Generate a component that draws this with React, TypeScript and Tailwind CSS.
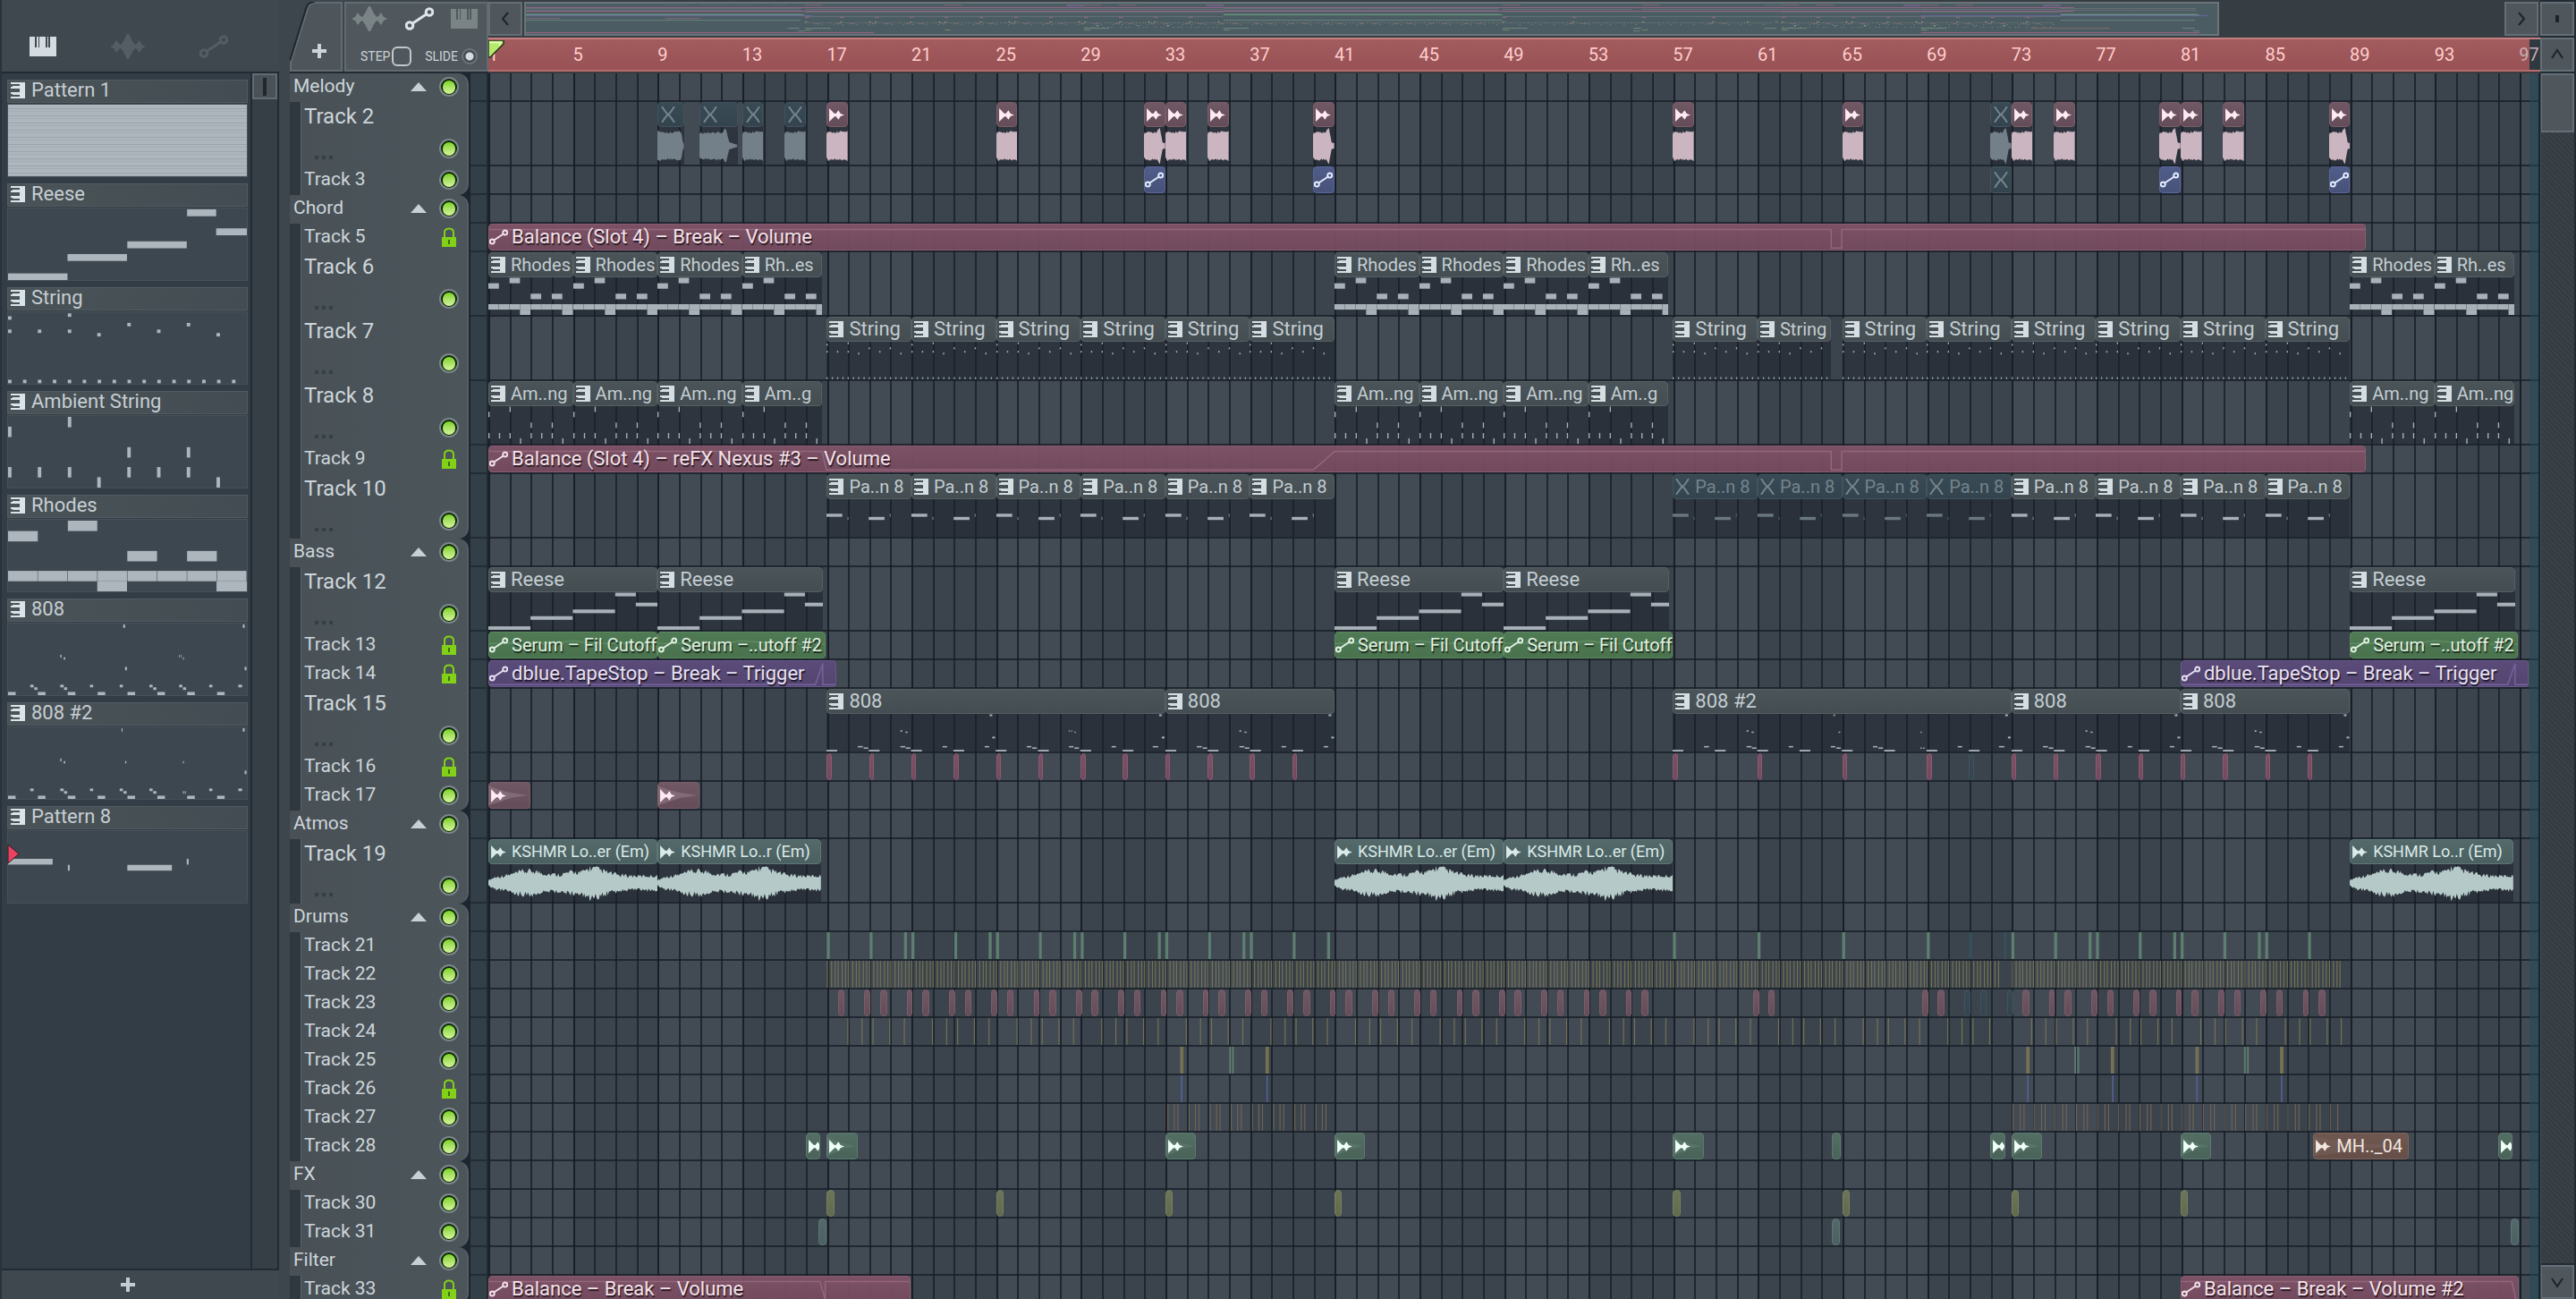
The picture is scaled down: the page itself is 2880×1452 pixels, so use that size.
import React from 'react';

type Tone = 'slate' | 'rose' | 'maroon' | 'blue' | 'green' | 'purple' | 'teal' | 'moss' | 'brown' | 'olive' | 'muted';

interface Clip {
  at: number;
  len: number;
  tone: Tone;
  icon?: 'pattern' | 'auto' | 'audio';
  label?: string;
  notes?: string;
  wave?: 'hit' | 'tail' | 'short' | 'long' | 'pad';
  curve?: string;
  size?: 'sm' | 'md';
}

interface Tick {
  at: number;
  w: number;
  fill: string;
}

interface Track {
  name: string;
  tall?: boolean;
  lock?: boolean;
  clips?: Clip[];
  ticks?: Tick[];
}

interface Group {
  name: string;
  tracks: Track[];
}

const BARS = 97;
const pct = (bars: number) => `${(bars / BARS) * 100}%`;
const range = (n: number) => Array.from({ length: n }, (_, i) => i);

// note rects are [x, y, w, h] on a 755 x 248 board that covers `bars` bars
const PATTERNS: Record<string, { bars: number; notes: number[][] }> = {
  Reese: { bars: 8, notes: [[0, 225, 188, 24], [188, 158, 188, 24], [377, 114, 188, 24], [566, 3, 92, 24], [658, 69, 97, 24]] },
  String: {
    bars: 4,
    notes: [
      [0, 14, 11, 12], [0, 60, 11, 12], [94, 60, 11, 12], [189, 4, 11, 12], [189, 60, 11, 12], [282, 72, 11, 12],
      [377, 37, 11, 12], [471, 60, 11, 12], [565, 37, 11, 12], [659, 72, 11, 12],
      ...range(16).map((i) => [i * 47.2, 234, 11, 12]),
    ],
  },
  'Ambient String': {
    bars: 4,
    notes: [
      [0, 37, 11, 36], [189, 3, 11, 36], [377, 108, 11, 36], [565, 108, 11, 36], [282, 212, 11, 36], [659, 212, 11, 36],
      ...[0, 94, 189, 377, 471, 565].map((x) => [x, 177, 11, 36]),
    ],
  },
  Rhodes: {
    bars: 4,
    notes: [
      [0, 39, 94, 36], [189, 3, 93, 36], [377, 108, 94, 36], [566, 108, 94, 36],
      ...range(8).map((i) => [i * 94.4, 177, 93, 36]), [282, 213, 94, 35], [659, 213, 96, 35],
    ],
  },
  '808': {
    bars: 16,
    notes: [
      ...range(8).map((i) => [i * 94.4, 237, 24, 11]),
      [70, 212, 11, 9], [83, 221, 10, 9], [165, 212, 11, 9], [177, 221, 10, 9], [259, 212, 10, 9], [353, 212, 10, 9],
      [447, 212, 10, 9], [459, 221, 10, 9], [541, 212, 10, 9], [553, 221, 10, 9], [636, 212, 10, 9], [728, 212, 12, 9],
      [364, 3, 6, 12], [742, 3, 6, 12], [165, 108, 4, 10], [176, 117, 5, 8], [370, 150, 6, 12], [748, 150, 6, 12],
      [541, 108, 2, 10], [546, 108, 2, 10], [553, 117, 3, 8],
    ],
  },
  '808 #2': {
    bars: 16,
    notes: [
      ...range(8).map((i) => [i * 94.4, 237, 24, 11]),
      [70, 212, 11, 9], [165, 212, 11, 9], [177, 221, 10, 9], [259, 212, 10, 9], [353, 212, 10, 9], [365, 221, 10, 9],
      [447, 212, 10, 9], [459, 221, 10, 9], [553, 221, 3, 9], [559, 221, 3, 9], [636, 212, 10, 9], [728, 212, 12, 9],
      [359, 3, 3, 12], [742, 3, 6, 12], [165, 108, 4, 10], [176, 117, 5, 8], [370, 117, 4, 8], [748, 150, 6, 12], [553, 117, 3, 8],
    ],
  },
  'Pattern 8': { bars: 4, notes: [[0, 96, 141, 20], [189, 117, 6, 20], [377, 117, 141, 20], [565, 96, 6, 20]] },
};

const pat = (at: number, len: number, label: string, notes: string, tone: Tone = 'slate', size?: Clip['size']): Clip => ({
  at, len, tone, label, notes, icon: 'pattern', size,
});
const auto = (at: number, len: number, tone: Tone, label: string, curve: string, size?: Clip['size']): Clip => ({
  at, len, tone, label, curve, icon: 'auto', size,
});
const audio = (at: number, len: number, tone: Tone, wave: Clip['wave']): Clip => ({ at, len, tone, wave, icon: 'audio' });
const box = (at: number, len: number, tone: Tone): Clip => ({ at, len, tone });

const YELLOW = '#757253';
const ORANGE = '#706453';
const GREEN = '#5e7f70';
const INDIGO = '#53609a';
const FADED = '#35505a';

const melody = [
  audio(8, 1.25, 'muted', 'short'), audio(10, 1.78, 'muted', 'long'), audio(12, 1, 'muted', 'hit'), audio(14, 1, 'muted', 'hit'),
  ...[16, 24].map((b) => audio(b, 1, 'rose', 'hit')),
  audio(31, 1, 'rose', 'tail'), audio(32, 1, 'rose', 'hit'), audio(34, 1, 'rose', 'hit'), audio(39, 1, 'rose', 'tail'),
  audio(56, 1, 'rose', 'hit'), audio(64, 1, 'rose', 'hit'),
  audio(71, 1, 'muted', 'tail'), audio(72, 1, 'rose', 'hit'), audio(74, 1, 'rose', 'hit'),
  audio(79, 1, 'rose', 'tail'), audio(80, 1, 'rose', 'hit'), audio(82, 1, 'rose', 'hit'), audio(87, 1, 'rose', 'tail'),
];

const every = (from: number, to: number, step: number, offsets: number[], w: number, fill: string): Tick[] => {
  const out: Tick[] = [];
  for (let b = from; b < to; b += step) offsets.forEach((o) => b + o < to && out.push({ at: b + o, w, fill }));
  return out;
};

const snares = (from: number, to: number): Clip[] => {
  const out: Clip[] = [box(from + 0.52, 0.32, 'rose')];
  for (let b = from + 1.78; b < to - 0.3; b += 2) out.push(box(b, 0.28, 'rose'), box(b + 0.74, 0.32, 'rose'));
  return out;
};

const GROUPS: Group[] = [
  {
    name: 'Melody',
    tracks: [
      { name: 'Track 2', tall: true, clips: melody },
      { name: 'Track 3', clips: [31, 39, 71, 79, 87].map((b) => auto(b, 1, b === 71 ? 'muted' : 'blue', '', '')) },
    ],
  },
  {
    name: 'Chord',
    tracks: [
      { name: 'Track 5', lock: true, clips: [auto(0, 88.77, 'maroon', 'Balance (Slot 4) – Break – Volume', 'M0 6 H63.5 V28 H64 V6 H88.77')] },
      {
        name: 'Track 6',
        tall: true,
        clips: [0, 4, 8, 12, 40, 44, 48, 52, 88, 92].map((b) =>
          pat(b, [12, 52, 92].includes(b) ? 3.78 : 4, [12, 52, 92].includes(b) ? 'Rh..es' : 'Rhodes', 'Rhodes', 'slate', 'md')),
      },
      {
        name: 'Track 7',
        tall: true,
        clips: [16, 20, 24, 28, 32, 36, 56, 60, 64, 68, 72, 76, 80, 84].map((b) =>
          pat(b, b === 60 ? 3.47 : 4, 'String', 'String', 'slate', b === 60 ? 'md' : undefined)),
      },
      {
        name: 'Track 8',
        tall: true,
        clips: [0, 4, 8, 12, 40, 44, 48, 52, 88, 92].map((b) =>
          pat(b, [12, 52, 92].includes(b) ? 3.78 : 4, [12, 52].includes(b) ? 'Am..g' : 'Am..ng', 'Ambient String', 'slate', 'md')),
      },
      {
        name: 'Track 9',
        lock: true,
        clips: [auto(0, 88.77, 'maroon', 'Balance (Slot 4) – reFX Nexus #3 – Volume', 'M0 6 H15.75 L15.95 28 H39 L40 6 H63.5 V28 H64 V6 H88.77')],
      },
      {
        name: 'Track 10',
        tall: true,
        clips: [16, 20, 24, 28, 32, 36, 56, 60, 64, 68, 72, 76, 80, 84].map((b) =>
          pat(b, 4, 'Pa..n 8', 'Pattern 8', b >= 56 && b < 72 ? 'muted' : 'slate', 'md')),
      },
    ],
  },
  {
    name: 'Bass',
    tracks: [
      { name: 'Track 12', tall: true, clips: [0, 8, 40, 48, 88].map((b) => pat(b, b % 40 === 0 ? 8 : 7.8, 'Reese', 'Reese')) },
      {
        name: 'Track 13',
        lock: true,
        clips: [
          auto(0, 8, 'green', 'Serum – Fil Cutoff', 'M0 13 H3 L4 10 L5 13 H8', 'md'),
          auto(8, 7.95, 'green', 'Serum –..utoff #2', 'M0 13 H3 L4 10 L6 14 H8', 'md'),
          auto(40, 8, 'green', 'Serum – Fil Cutoff', 'M0 13 H3 L4 10 L5 13 H8', 'md'),
          auto(48, 8, 'green', 'Serum – Fil Cutoff', 'M0 13 H3 L4 10 L5 13 H8', 'md'),
          auto(88, 7.95, 'green', 'Serum –..utoff #2', 'M0 13 H3 L4 10 L6 14 H8', 'md'),
        ],
      },
      {
        name: 'Track 14',
        lock: true,
        clips: [0, 80].map((b) => auto(b, 16.45, 'purple', 'dblue.TapeStop – Break – Trigger', 'M0 28 H15.5 L15.85 3 V28 H16.45')),
      },
      {
        name: 'Track 15',
        tall: true,
        clips: [pat(16, 16, '808', '808'), pat(32, 8, '808', '808'), pat(56, 16, '808 #2', '808 #2'), pat(72, 8, '808', '808'), pat(80, 8, '808', '808')],
      },
      {
        name: 'Track 16',
        lock: true,
        clips: [
          ...[...range(12).map((i) => 16 + i * 2), 56, 60, 64, 68, ...range(8).map((i) => 72 + i * 2)].map((b) => box(b, 0.23, 'maroon')),
          box(70, 0.23, 'muted'),
        ],
      },
      { name: 'Track 17', clips: [audio(0, 1.97, 'rose', 'pad'), audio(8, 1.97, 'rose', 'pad')] },
    ],
  },
  {
    name: 'Atmos',
    tracks: [
      {
        name: 'Track 19',
        tall: true,
        clips: [[0, 8], [8, 7.72], [40, 8], [48, 8], [88, 7.72]].map(([b, l]) => ({
          ...audio(b, l, 'teal', 'pad'), label: l === 8 ? 'KSHMR Lo..er (Em)' : 'KSHMR Lo..r (Em)', size: 'sm' as const,
        })),
      },
    ],
  },
  {
    name: 'Drums',
    tracks: [
      {
        name: 'Track 21',
        ticks: [
          ...every(16, 40, 4, [0, 2.02, 3.65], 0.14, GREEN), ...every(56, 72, 4, [0], 0.14, GREEN),
          ...[70, 71.64].map((at) => ({ at, w: 0.14, fill: FADED })), ...every(72, 87, 4, [0, 2.02, 3.65], 0.14, GREEN),
        ],
      },
      { name: 'Track 22', ticks: [...every(16, 71.5, 1, [0, 0.2, 0.37, 0.51, 0.7, 0.86], 0.05, YELLOW), ...every(72, 87.6, 1, [0.02, 0.2, 0.37, 0.51, 0.7, 0.86], 0.05, YELLOW)] },
      {
        name: 'Track 23',
        clips: [
          ...snares(16, 56), ...[59.78, 60.52, 67.78, 68.52].map((b) => box(b, 0.3, 'rose')),
          ...[69.78, 70.52, 71.78].map((b) => box(b, 0.3, 'muted')), ...snares(72, 88),
        ],
      },
      { name: 'Track 24', ticks: [...every(16, 71, 4, [0.97, 1.64, 2.16, 2.95, 3.64], 0.05, YELLOW), ...every(72, 88, 4, [0.93, 1.6, 2.1, 2.9, 3.57], 0.05, YELLOW)] },
      {
        name: 'Track 25',
        ticks: [
          ...[32.7, 36.74, 72.7, 76.7, 80.7, 84.7].map((at) => ({ at, w: 0.16, fill: YELLOW })),
          ...[35.02, 35.16, 74.98, 75.12, 83, 83.14].map((at) => ({ at, w: 0.08, fill: GREEN })),
        ],
      },
      { name: 'Track 26', lock: true, ticks: [32.74, 36.78, 72.74, 76.76, 80.74, 84.74].map((at) => ({ at, w: 0.07, fill: INDIGO })) },
      { name: 'Track 27', ticks: [...every(32, 39.8, 1, [0.1, 0.4, 0.57], 0.05, ORANGE), ...every(72, 87.5, 1, [0.05, 0.4, 0.57], 0.05, ORANGE)] },
      {
        name: 'Track 28',
        clips: [
          audio(15, 0.67, 'moss', 'hit'), audio(16, 1.48, 'moss', 'pad'), audio(32, 1.45, 'moss', 'pad'), audio(40, 1.45, 'moss', 'pad'),
          audio(56, 1.45, 'moss', 'pad'), box(63.5, 0.45, 'moss'), audio(71, 0.7, 'moss', 'hit'), audio(72, 1.43, 'moss', 'pad'),
          audio(80, 1.43, 'moss', 'pad'), { ...audio(86.27, 4.52, 'brown', 'pad'), label: 'MH.._04', size: 'md' }, audio(95, 0.7, 'moss', 'hit'),
        ],
      },
    ],
  },
  {
    name: 'FX',
    tracks: [
      { name: 'Track 30', clips: [16, 24, 32, 40, 56, 64, 72, 80].map((b) => box(b, 0.36, 'olive')) },
      { name: 'Track 31', clips: [box(15.6, 0.38, 'teal'), box(63.5, 0.38, 'teal'), box(95.6, 0.38, 'teal')] },
    ],
  },
  {
    name: 'Filter',
    tracks: [
      {
        name: 'Track 33',
        lock: true,
        clips: [
          auto(0, 19.95, 'maroon', 'Balance – Break – Volume', 'M0 6 H15.7 L15.95 28 V6 H19.95'),
          auto(80, 15.97, 'maroon', 'Balance – Break – Volume #2', 'M0 6 H15.7 L15.9 28'),
        ],
      },
    ],
  },
];

const TONES: Record<Tone, { title: string; text: string; ink: string; map: string }> = {
  slate: { title: 'bg-linear-to-b from-[#4b5458] to-[#444d51] border-[#566064]', text: 'text-[#c3cdd2]', ink: '#a9b1b8', map: '#66747b' },
  rose: { title: 'bg-linear-to-b from-[#705865] to-[#644c58] border-[#7b5d69]', text: 'text-[#fdeaf2]', ink: '#cbb5c0', map: '#85697a' },
  maroon: { title: 'bg-linear-to-b from-[#7f5267]/95 to-[#754a5e]/95 border-[#8c5b70]', text: 'text-[#f4e1ea]', ink: '#94667a', map: '#a5668c' },
  blue: { title: 'bg-linear-to-b from-[#505d8a] to-[#475279] border-[#5a679a]', text: 'text-[#e4ecff]', ink: '#67749f', map: '#65689e' },
  green: { title: 'bg-linear-to-b from-[#4f7a54] to-[#49724d] border-[#5b8a5f]', text: 'text-[#e0f2e2]', ink: '#5f8b63', map: '#66a17c' },
  purple: { title: 'bg-linear-to-b from-[#5a4b78] to-[#534570] border-[#685889]', text: 'text-[#e8e0f4]', ink: '#73639a', map: '#6c68a4' },
  teal: { title: 'bg-linear-to-b from-[#54696a] to-[#4b6060] border-[#5e7677]', text: 'text-[#d9eae8]', ink: '#b5cac8', map: '#6a8586' },
  moss: { title: 'bg-linear-to-b from-[#536e64] to-[#4a6359] border-[#5d7a6f]', text: 'text-[#f0fff8]', ink: '#6a887b', map: '#708d80' },
  brown: { title: 'bg-linear-to-b from-[#6f5850] to-[#664f48] border-[#7c645c]', text: 'text-[#f2e6e0]', ink: '#7e665e', map: '#85706a' },
  olive: { title: 'bg-linear-to-b from-[#6d7559] to-[#616a4c] border-[#767f61]', text: 'text-white', ink: '#868d6c', map: '#7b8a70' },
  muted: { title: 'bg-linear-to-b from-[#3a4a54] to-[#34444e] border-[#42535d]', text: 'text-[#74848d]', ink: '#748089', map: '#55656d' },
};

function PianoIcon({ className }: { className: string }) {
  return (
    <svg viewBox="0 0 30 22" className={className} fill="currentColor" aria-hidden="true">
      <path d="M0 0H6V12H8V0H10V12H11V0H18V12H20V0H21V12H23V0H30V22H0Z" />
    </svg>
  );
}

function WaveIcon({ className }: { className: string }) {
  return (
    <svg viewBox="0 0 40 28" className={className} fill="currentColor" aria-hidden="true">
      <path d="M0 14L4 12L7 7L10 11L12 12L15 8L17 4L19 0H21L23 4L25 8L28 12L30 11L33 7L36 12L40 14L36 16L33 21L30 17L28 16L25 20L23 24L21 28H19L17 24L15 20L12 16L10 17L7 21L4 16Z" />
    </svg>
  );
}

function AutoIcon({ className }: { className: string }) {
  return (
    <svg viewBox="0 0 32 26" className={className} fill="none" stroke="currentColor" strokeWidth="3" aria-hidden="true">
      <circle cx="27" cy="5.5" r="3.8" />
      <circle cx="5" cy="20.5" r="3.8" />
      <path d="M8.5 18L23.5 8" />
    </svg>
  );
}

function PatternIcon({ className }: { className: string }) {
  return (
    <svg viewBox="0 0 16 18" className={className} fill="currentColor" aria-hidden="true">
      <path d="M0 0H16V18H0V16H10V14H2V13H0V11H10V7H0V5H2V4H10V2H0Z" />
    </svg>
  );
}

function AudioIcon({ className }: { className: string }) {
  return (
    <svg viewBox="0 0 18 16" className={className} fill="currentColor" aria-hidden="true">
      <path d="M0 0L6 6L8 6.5L11 2.5L13.500 6.500L18 8L13.500 9.500L11 13.500L8 9.500L6 10L0 16Z" />
    </svg>
  );
}

function MuteIcon({ className }: { className: string }) {
  return (
    <svg viewBox="0 0 16 18" className={className} fill="none" stroke="currentColor" strokeWidth="2" aria-hidden="true">
      <path d="M1 0Q6 8 8 9T15 18M15 0Q10 8 8 9T1 18" />
    </svg>
  );
}

function LockIcon() {
  return (
    <svg viewBox="0 0 16 22" className="h-[22px] w-4" aria-hidden="true">
      <path d="M3 11V6Q3 1.500 8 1.500T13 6V11" fill="none" stroke="#82d017" strokeWidth="2" />
      <path d="M0 11H16V22H0Z" fill="#82d017" />
      <path d="M7 14H9V19H7Z" fill="#3f6a12" />
    </svg>
  );
}

function Notes({ name, bars, fill }: { name: string; bars?: number; fill: string }) {
  const p = PATTERNS[name];
  const width = 755 * ((bars ?? p.bars) / p.bars);
  return (
    <svg viewBox={`0 0 ${width} 248`} preserveAspectRatio="none" className="block h-full w-full" aria-hidden="true">
      {p.notes.map(([x, y, w, h], i) => (
        <rect key={i} x={x} y={y} width={w} height={h} fill={fill} />
      ))}
    </svg>
  );
}

// [position, half height] pairs, both 0..1
const ENVELOPES: Record<string, number[][]> = {
  hit: [[0, 0.66], [0.1, 0.78], [0.3, 0.7], [0.5, 0.74], [0.75, 0.76], [0.9, 0.72], [1, 0.75]],
  tail: [[0, 0.66], [0.2, 0.76], [0.4, 0.72], [0.6, 0.74], [0.75, 0.95], [0.84, 0.4], [0.88, 0.15], [1, 0.15]],
  short: [[0, 0.8], [0.3, 0.7], [0.6, 0.72], [0.85, 0.78], [0.92, 0.6], [0.96, 0.2], [1, 0.1]],
  long: [[0, 0.68], [0.3, 0.7], [0.5, 0.74], [0.62, 0.7], [0.7, 0.95], [0.78, 0.2], [0.9, 0.12], [1, 0.05]],
  kshmr: [[0, 0.15], [0.04, 0.3], [0.12, 0.42], [0.2, 0.6], [0.27, 0.62], [0.34, 0.48], [0.42, 0.44], [0.5, 0.58], [0.55, 0.55], [0.6, 0.78], [0.64, 0.74], [0.7, 0.56], [0.78, 0.4], [0.9, 0.36], [1, 0.38]],
};

function wavePath(kind: string, portion: number) {
  const env = ENVELOPES[kind];
  const rough = kind === 'kshmr' ? 0.26 : 0.08;
  const n = kind === 'kshmr' ? 150 : 24;
  const top: string[] = [];
  const bottom: string[] = [];
  range(Math.round(n * portion) + 1).forEach((i) => {
    const t = Math.min(1, i / n);
    const k = Math.max(1, env.findIndex(([x]) => x >= t));
    const [x0, y0] = env[k - 1];
    const [x1, y1] = env[k];
    const h = y0 + ((y1 - y0) * (t - x0)) / (x1 - x0);
    const a = Math.abs(Math.sin(i * 12.9898) * 43758.5453) % 1;
    const b = Math.abs(Math.sin(i * 78.233) * 12543.123) % 1;
    const x = ((t / portion) * 200).toFixed(1);
    top.push(`${x} ${(20 - 20 * h * (1 - rough + 2 * rough * a)).toFixed(1)}`);
    bottom.unshift(`${x} ${(20 + 20 * h * (1 - rough + 2 * rough * b)).toFixed(1)}`);
  });
  return `M${top.join('L')}L${bottom.join('L')}Z`;
}

function Wave({ kind, portion, fill }: { kind: string; portion: number; fill: string }) {
  return (
    <svg viewBox="0 0 200 40" preserveAspectRatio="none" className="block h-full w-full" aria-hidden="true">
      <path d={wavePath(kind, portion)} fill={fill} />
    </svg>
  );
}

const LABEL_SIZE = { sm: 'text-[18px]', md: 'text-[20px]', lg: 'text-[22px]' };

function ClipTitle({ clip, tall }: { clip: Clip; tall?: boolean }) {
  const tone = TONES[clip.tone];
  const muted = clip.tone === 'muted';
  const labelled = Boolean(clip.label);
  return (
    <div className={`relative flex items-center rounded-sm border ${labelled ? '' : 'overflow-hidden'} ${tall ? 'h-7' : 'h-full'} ${tone.title} ${tone.text}`}>
      {clip.curve && (
        <svg viewBox={`0 0 ${clip.len} 30`} preserveAspectRatio="none" className="absolute inset-0 h-full w-full" aria-hidden="true">
          <path d={clip.curve} fill="none" stroke={tone.ink} strokeWidth="1.500" vectorEffect="non-scaling-stroke" />
        </svg>
      )}
      {!tall && clip.wave === 'pad' && (
        <svg viewBox="0 0 46 30" preserveAspectRatio="none" className="absolute inset-0 h-full w-full" aria-hidden="true">
          <path d="M0 4L14 9L26 12L45 15L26 18L14 22L0 27Z" fill={tone.ink} fillOpacity={clip.tone === 'rose' ? 0.25 : 0.4} />
        </svg>
      )}
      {muted && clip.icon && <MuteIcon className={`relative h-[18px] w-4 shrink-0 ${clip.icon === 'pattern' ? 'ml-0.5' : 'ml-[3px]'}`} />}
      {!muted && clip.icon === 'pattern' && <PatternIcon className="relative ml-0.5 h-[18px] w-4 shrink-0 text-[#d5dfe3]" />}
      {!muted && clip.icon === 'auto' && <AutoIcon className="relative h-[18px] w-[21px] shrink-0" />}
      {!muted && clip.icon === 'audio' && <AudioIcon className="relative ml-0.5 h-[15px] w-[17px] shrink-0" />}
      {labelled && (
        <span
          className={`relative whitespace-nowrap leading-6 ${clip.icon === 'auto' ? 'ml-1 [text-shadow:1px_2px_1px_#000a]' : 'ml-1.5'} ${LABEL_SIZE[clip.size ?? 'lg']}`}
        >
          {clip.label}
        </span>
      )}
    </div>
  );
}

function ClipView({ clip, tall }: { clip: Clip; tall?: boolean }) {
  const tone = TONES[clip.tone];
  const style = { left: pct(clip.at), width: pct(clip.len) };
  if (!tall) {
    return (
      <div className="absolute inset-y-0" style={style}>
        <ClipTitle clip={clip} />
      </div>
    );
  }
  return (
    <div className="absolute inset-y-0 flex flex-col bg-[#1a2027]/50" style={style}>
      <ClipTitle clip={clip} tall />
      <div className="min-h-0 flex-1">
        {clip.notes && <Notes name={clip.notes} bars={clip.len} fill={clip.tone === 'muted' ? '#6b7880' : tone.ink} />}
        {clip.wave && (
          <Wave kind={clip.wave === 'pad' ? 'kshmr' : clip.wave} portion={clip.wave === 'pad' ? clip.len / 8 : 1} fill={tone.ink} />
        )}
      </div>
    </div>
  );
}

function Lane({ track }: { track?: Track }) {
  return (
    <div className={`relative shrink-0 border-b-2 border-[#161c26]/75 ${track?.tall ? 'h-[72px]' : 'h-8'}`}>
      {track?.ticks && (
        <svg viewBox={`0 0 ${BARS} 1`} preserveAspectRatio="none" className="absolute inset-0 h-full w-full" aria-hidden="true">
          {track.ticks.map((t, i) => (
            <rect key={i} x={t.at} y="0" width={t.w} height="1" fill={t.fill} />
          ))}
        </svg>
      )}
      {track?.clips?.map((c, i) => <ClipView key={i} clip={c} tall={track.tall} />)}
    </div>
  );
}

function Led({ label }: { label: string }) {
  return (
    <button
      type="button"
      aria-label={`Mute ${label}`}
      className="flex size-[22px] items-center justify-center rounded-full border-2 border-[#7d878a] bg-[#0a2a08]"
    >
      <span className="h-[15px] w-3.5 rounded-full bg-linear-to-b from-[#7fd01f] to-[#d6f59a]" />
    </button>
  );
}

function TrackHead({ track }: { track: Track }) {
  return (
    <div className={`flex shrink-0 justify-between border-l border-[#5a6369] pr-[9px] pl-[3px] ${track.tall ? 'h-[72px]' : 'h-8'}`}>
      <div className="flex flex-col">
        <span className={`whitespace-nowrap text-[#cdd5da] ${track.tall ? 'text-[24px] leading-8' : 'text-[21px] leading-7'}`}>{track.name}</span>
        {track.tall && (
          <span className="mt-7 ml-3 flex gap-1">
            {range(3).map((i) => (
              <i key={i} className="size-1 bg-[#363e46]" />
            ))}
          </span>
        )}
      </div>
      <div className={`flex w-[22px] items-end justify-center ${track.tall ? 'pb-[9px]' : 'pb-1.5'}`}>
        {track.lock ? <button type="button" aria-label={`Unlock ${track.name}`}><LockIcon /></button> : <Led label={track.name} />}
      </div>
    </div>
  );
}

function GroupHead({ group }: { group: Group }) {
  return (
    <div className="shrink-0 overflow-hidden rounded-r-xl border-r-2 border-[#555e64] bg-linear-to-r from-[#495157] to-[#4b555a]">
      <div className="flex h-8 items-start justify-between pr-[9px] pl-1">
        <span className="text-[21px] leading-7 text-[#cdd5da]">{group.name}</span>
        <div className="flex items-center gap-[14px] pt-1">
          <button type="button" aria-label={`Collapse ${group.name}`}>
            <svg viewBox="0 0 18 10" className="h-2.5 w-[18px]" aria-hidden="true"><path d="M9 0L18 10H0Z" fill="#c8d0d4" /></svg>
          </button>
          <Led label={group.name} />
        </div>
      </div>
      <div className="flex">
        <div className="w-3 bg-[#2f373f]" />
        <div className="flex flex-1 flex-col">
          {group.tracks.map((t) => <TrackHead key={t.name} track={t} />)}
        </div>
      </div>
    </div>
  );
}

function PatternList() {
  const names = ['Pattern 1', 'Reese', 'String', 'Ambient String', 'Rhodes', '808', '808 #2', 'Pattern 8'];
  return (
    <aside className="flex w-[312px] shrink-0 flex-col border-l-2 border-[#2a333b] bg-[#40484f]">
      <nav className="flex h-20 shrink-0 items-end gap-[60px] pb-3.5 pl-[31px]">
        <button type="button" aria-label="Patterns" className="pb-[3px] text-[#d4dce1]"><PianoIcon className="h-[22px] w-[30px]" /></button>
        <button type="button" aria-label="Audio clips" className="text-[#545d63]"><WaveIcon className="h-7 w-10" /></button>
        <button type="button" aria-label="Automation clips" className="pb-px text-[#545d63]"><AutoIcon className="h-[26px] w-8" /></button>
      </nav>
      <div className="flex min-h-0 flex-1 border-y-2 border-r-2 border-[#222b33]">
        <ul className="flex-1 bg-[#323d45] pt-[7px] pr-[3px] pl-1.5">
          {names.map((n) => (
            <li key={n} className="relative mb-[7px]">
              <div className="flex h-[26px] items-start gap-[7px] border border-[#525b60] bg-linear-to-r from-[#4a5357] to-[#434c52] pl-[3px]">
                <PatternIcon className="mt-0.5 h-[18px] w-4 text-[#d9e3ea]" />
                <span className="text-[22px] leading-[22px] text-[#c6ced3]">{n}</span>
              </div>
              <div className="mt-px h-[82px] border border-[#46515a] bg-[#3d474f]">
                {PATTERNS[n] ? (
                  <Notes name={n} fill="#adb6bc" />
                ) : (
                  <div className="h-full bg-[#adb6bd] bg-[repeating-linear-gradient(#0000_0_4px,#9ca5ac_4px_5px,#0000_5px_7px,#a3acb3_7px_8px)]" />
                )}
              </div>
              {n === 'Pattern 8' && (
                <svg viewBox="0 0 14 23" className="absolute top-[42px] left-0 h-[23px] w-3.5" aria-hidden="true">
                  <path d="M1 1L13 11.500L1 22Z" fill="#e8425f" stroke="#2a1820" />
                </svg>
              )}
            </li>
          ))}
        </ul>
        <div className="w-[30px] border-l-2 border-[#222b33] bg-[#363e46]">
          <div className="flex h-[29px] items-center justify-center border-2 border-[#626b71] bg-[#4a5258]"><i className="h-5 w-1 bg-[#20272e]" /></div>
        </div>
      </div>
      <button type="button" aria-label="Add pattern" className="flex h-8 shrink-0 items-center justify-center pr-7">
        <svg viewBox="0 0 16 16" className="size-4" aria-hidden="true"><path d="M6 0H10V6H16V10H10V16H6V10H0V6H6Z" fill="#c4ccd1" /></svg>
      </button>
    </aside>
  );
}

function ToolTabs() {
  return (
    <div className="flex h-20 shrink-0 gap-0.5 pt-0.5">
      <button type="button" aria-label="Add track" className="relative h-[78px] w-[59px]">
        <svg viewBox="0 0 59 78" className="absolute inset-0 h-full w-full" aria-hidden="true">
          <path d="M1 77V68L20 8Q22 1 29 1H58V77Z" fill="#4e565c" stroke="#626b71" strokeWidth="2" />
          <path d="M0 66L18 8Q20 0 28 0" fill="none" stroke="#20272e" strokeWidth="2" />
          <path d="M31 47H35V53H41V57H35V63H31V57H25V53H31Z" fill="#ccd4d8" />
        </svg>
      </button>
      <div className="flex flex-1 flex-col justify-between border-2 border-[#626b71] bg-[#50585d] pt-[3px] pr-2.5 pb-1 pl-1.5">
        <div className="flex items-center justify-between">
          <button type="button" aria-label="Audio" className="text-[#7a8386]"><WaveIcon className="h-7 w-10" /></button>
          <button type="button" aria-label="Automation" className="text-[#dfe5e8]"><AutoIcon className="h-[26px] w-8" /></button>
          <button type="button" aria-label="Patterns" className="text-[#7a8386]"><PianoIcon className="h-[22px] w-[30px]" /></button>
        </div>
        <div className="flex items-center justify-between pl-2.5 text-[14px] text-[#ccd4d8]">
          <label className="flex items-center gap-0.5">
            STEP
            <input type="checkbox" className="size-[22px] appearance-none rounded-md border-2 border-[#c0c8cb]" />
          </label>
          <label className="flex items-center gap-1">
            SLIDE
            <input type="radio" defaultChecked className="size-[18px] appearance-none rounded-full border-2 border-[#6c7579] bg-[radial-gradient(circle,#d4dcde_0_4px,#454d52_5px)]" />
          </label>
        </div>
      </div>
    </div>
  );
}

function Minimap() {
  const rows = GROUPS.flatMap((g) => [undefined, ...g.tracks]);
  return (
    <svg viewBox={`0 0 ${BARS} 34`} preserveAspectRatio="none" className="block h-full w-full" aria-hidden="true">
      {rows.map((t, r) => (
        <React.Fragment key={r}>
          {t?.clips?.map((c, i) => <rect key={i} x={c.at} y={r + 0.2} width={c.len} height="0.9" fill={TONES[c.tone].map} />)}
          {t?.ticks?.map((c, i) => <rect key={`t${i}`} x={c.at} y={r} width={c.w} height="1" fill="#7d8d7c" />)}
        </React.Fragment>
      ))}
    </svg>
  );
}

const Chevron = ({ d }: { d: string }) => (
  <svg viewBox="0 0 16 20" className="h-5 w-4" fill="none" stroke="#1c242b" strokeWidth="2" aria-hidden="true"><path d={d} /></svg>
);

const cap = 'flex shrink-0 items-center justify-center border-2 border-[#646e74] bg-[#4f575d]';

function Playlist() {
  return (
    <main className="flex min-w-0 flex-1 flex-col">
      <div className="flex h-[42px] shrink-0 bg-[#363d43] py-0.5">
        <button type="button" aria-label="Scroll left" className={`${cap} w-[38px]`}><Chevron d="M11 3L5 10L11 17" /></button>
        <div className="flex-1 pl-0.5">
          <div className="h-full w-[85.6%] border-2 border-[#69757a] bg-[#4c5c63]"><Minimap /></div>
        </div>
        <button type="button" aria-label="Scroll right" className={`${cap} mr-0.5 w-[38px]`}><Chevron d="M5 3L11 10L5 17" /></button>
      </div>
      <div className="relative flex h-[38px] shrink-0 items-center border-t-2 border-b-2 border-t-[#c57f80] border-b-[#b96d6e] bg-linear-to-b from-[#a35c5e] to-[#985154]">
        <div className="absolute inset-y-0 right-0 w-3 bg-[#1c343c]/85" />
        {range(25).map((i) => (
          <span
            key={i}
            className={`relative shrink-0 text-[20px] leading-9 ${i === 24 ? 'text-[#c5aeb2]' : 'text-[#ffcdcd]'}`}
            style={{ width: pct(i === 24 ? 1 : 4) }}
          >
            {i * 4 + 1}
          </span>
        ))}
        <svg viewBox="0 0 18 20" className="absolute top-px left-0 h-5 w-[18px]" aria-hidden="true">
          <path d="M0 0H17V4L2 19H0Z" fill="#b5ea6c" stroke="#26301c" strokeWidth="1.500" />
          <path d="M1 2.500H14L12 6" fill="none" stroke="#eaffc4" strokeWidth="1.500" />
        </svg>
      </div>
      <div className="relative flex min-h-0 flex-1 flex-col border-t-2 border-[#3f3a40]">
        <div className="absolute inset-0 flex">
          {range(BARS).map((i) => (
            <div key={i} className={`flex-1 border-l-2 ${i % 4 === 0 ? 'border-[#181f28]' : 'border-[#1e2630]'} ${i % 8 < 4 ? 'bg-[#424a54]' : 'bg-[#3b434c]'}`} />
          ))}
        </div>
        {GROUPS.map((g) => (
          <React.Fragment key={g.name}>
            <Lane />
            {g.tracks.map((t) => <Lane key={t.name} track={t} />)}
          </React.Fragment>
        ))}
        <div className="absolute inset-y-0 right-0 w-3 border-r-2 border-[#1c252c] bg-[#1f4c58]/50" />
      </div>
    </main>
  );
}

export default function App() {
  return (
    <div className="flex h-screen overflow-hidden bg-[#3d454d] font-['Roboto','Noto_Sans',sans-serif]">
      <PatternList />
      <div className="ml-3 flex w-[222px] shrink-0 flex-col">
        <ToolTabs />
        <div className="flex min-h-0 flex-1 border-t-2 border-r-2 border-[#222b33] bg-[#1b262e]">
          <div className="flex w-[200px] shrink-0 flex-col">
            {GROUPS.map((g) => <GroupHead key={g.name} group={g} />)}
          </div>
          <div className="ml-0.5 flex flex-1 flex-col bg-[#323f47]">
            {GROUPS.map((g) => (
              <React.Fragment key={g.name}>
                <div className="h-8 shrink-0 border-b-2 border-[#222c34]" />
                {g.tracks.map((t) => (
                  <div key={t.name} className={`shrink-0 border-b-2 border-[#222c34] ${t.tall ? 'h-[72px]' : 'h-8'}`} />
                ))}
              </React.Fragment>
            ))}
          </div>
        </div>
      </div>
      <Playlist />
      <div className="flex w-10 shrink-0 flex-col gap-0.5 border-r-2 border-[#222b33] bg-[#222b33] pt-0.5">
        <div className={`${cap} h-[38px]`}><i className="h-2 w-1 bg-[#1c242b]" /></div>
        <button type="button" aria-label="Scroll up" className={`${cap} h-[38px]`}><Chevron d="M2 14L8 5L14 14" /></button>
        <div className="flex flex-1 flex-col bg-[#363d43] bg-[repeating-linear-gradient(45deg,#343b41_0_2px,#3a4147_2px_4px)]">
          <div className={`${cap} h-[66px]`} />
        </div>
        <button type="button" aria-label="Scroll down" className={`${cap} h-[38px]`}><Chevron d="M2 6L8 15L14 6" /></button>
      </div>
    </div>
  );
}
